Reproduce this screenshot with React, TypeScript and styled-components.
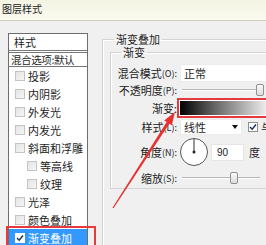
import React from 'react'
import styled, { createGlobalStyle } from 'styled-components'

const GlobalStyle = createGlobalStyle`
  html, body { margin: 0; padding: 0; }
  body {
    font-family: "Noto Sans CJK SC", "Noto Sans", sans-serif;
    font-size: 11px;
    color: #1e1e1e;
    background: #f0f0f0;
  }
`

const Window = styled.div`
  position: relative;
  width: 266px;
  height: 245px;
  overflow: hidden;
  background: #f0f0f0;
`

const TitleBar = styled.div`
  height: 20px;
  border-bottom: 1px solid #cfcfc4;
  background: linear-gradient(#f4f4e3, #fafaef);
  padding-left: 2px;
  font-size: 10px;
  line-height: 18px;
  color: #222;
`

const Body = styled.div`
  display: flex;
  align-items: flex-start;
  padding: 12px 0 0 8px;
`

const StyleList = styled.div`
  flex: none;
  width: 78px;
  height: 240px;
  border: 1px solid #6e6e6e;
  background: #fff;
  display: flex;
  flex-direction: column;
`

const ListHeader = styled.div`
  height: 16px;
  line-height: 17px;
  padding-left: 5px;
  border-bottom: 3px double #777;
`

const MixRow = styled.div`
  height: 13px;
  line-height: 13px;
  padding-left: 2px;
  border-bottom: 1px solid #777;
  font-size: 10.5px;
  letter-spacing: -0.4px;
  white-space: nowrap;
`

const Item = styled.div<{ $indent?: boolean; $active?: boolean }>`
  position: relative;
  height: 18px;
  display: flex;
  align-items: center;
  gap: 3px;
  padding-left: ${p => (p.$indent ? 18 : 6)}px;
  white-space: nowrap;
  background: ${p => (p.$active ? '#3399ff' : 'transparent')};
  color: ${p => (p.$active ? '#fff' : '#1e1e1e')};

  ${p => p.$active && `
    &::after {
      content: '';
      position: absolute;
      left: -3px;
      top: -3px;
      width: 86px;
      height: 40px;
      border: 2px solid #e8393d;
    }
  `}
`

const Box = styled.span<{ $checked?: boolean }>`
  flex: none;
  width: 8px;
  height: 8px;
  border: 1px solid ${p => (p.$checked ? '#fff' : '#c4c4c4')};
  background: ${p => (p.$checked ? '#fff' : 'linear-gradient(135deg, #e4e4e4, #f6f6f6)')};
  display: flex;
  align-items: center;
  justify-content: center;
`

const Tick = () => (
  <svg width="8" height="8" viewBox="0 0 8 8">
    <path d="M1 4 L3.2 6.3 L7 1.5" fill="none" stroke="#1f2d5a" strokeWidth="1.4" />
  </svg>
)

const RightPane = styled.div`
  margin-left: 14px;
`

const GroupBox = styled.fieldset`
  margin: 0;
  padding: 1px 0 0 7px;
  width: 220px;
  height: 240px;
  border: 1px solid #d3d3d3;
  box-shadow: inset 1px 1px 0 #fff;
  min-width: 0;
`

const Legend = styled.legend<{ $offset: number }>`
  margin-left: ${p => p.$offset}px;
  padding: 0 2px;
  font-size: 11px;
  line-height: 12px;
`

const InnerBox = styled.fieldset`
  margin: 0;
  padding: 0;
  width: 200px;
  border: 1px solid #d3d3d3;
  box-shadow: inset 1px 1px 0 #fff;
  min-width: 0;
`

const Form = styled.div`
  margin-top: 6px;
  display: grid;
  grid-template-columns: 66px 1fr;
  grid-template-rows: 18px 16px 20px 18px 32px 20px;
  column-gap: 3px;
`

const Label = styled.div`
  display: flex;
  align-items: center;
  justify-content: flex-end;
  white-space: nowrap;
  font-size: 11px;
  color: #222;

  small { font-size: 9px; }
`

const Control = styled.div`
  display: flex;
  align-items: center;
  white-space: nowrap;
`

const Select = styled.div<{ $w: number; $h?: number }>`
  position: relative;
  width: ${p => p.$w}px;
  height: ${p => p.$h || 16}px;
  background: #fff;
  border: 1px solid #ececec;
  padding-left: 3px;
  box-sizing: border-box;
  display: flex;
  align-items: center;
`

const Caret = styled.span`
  margin-left: auto;
  margin-right: 3px;
  width: 0;
  height: 0;
  border-left: 3.5px solid transparent;
  border-right: 3.5px solid transparent;
  border-top: 4px solid #111;
`

const Slider = styled.div`
  position: relative;
  width: 78px;
  height: 2px;
  margin-left: 2px;
  border-top: 1px solid #b8b8b8;
  border-bottom: 1px solid #fff;
  box-sizing: border-box;
`

const Thumb = styled.span<{ $at: number }>`
  position: absolute;
  left: ${p => p.$at}px;
  top: -6px;
  width: 6px;
  height: 10px;
  border: 1px solid #909090;
  border-radius: 2px;
  background: linear-gradient(#fafafa, #dcdcdc);
`

const GradientBar = styled.div`
  margin-left: -3px;
  width: 110px;
  height: 20px;
  box-sizing: border-box;
  border: 2px solid #e5393b;
  padding: 1px;
  background: #fff;
`

const GradientFill = styled.div`
  height: 100%;
  background: linear-gradient(to right, #000 0%, #6a6a6a 35%, #f2f2f2 85%, #fff 100%);
`

const CheckLabel = styled.span`
  margin-left: 6px;
  display: flex;
  align-items: center;
  gap: 3px;
`

const SmallBox = styled.span`
  width: 8px;
  height: 8px;
  border: 1px solid #8e8f8f;
  background: #fff;
  display: flex;
  align-items: center;
  justify-content: center;
`

const NumberInput = styled.div`
  width: 33px;
  height: 17px;
  box-sizing: border-box;
  background: #fff;
  border: 1px solid #e6e6e6;
  padding-left: 5px;
  line-height: 16px;
  font-family: "Liberation Sans", Arial, sans-serif;
  font-size: 10px;
  margin-left: 1px;
`

const Unit = styled.span`
  margin-left: 5px;
`

const Overlay = styled.svg`
  position: absolute;
  left: 0;
  top: 0;
  pointer-events: none;
`

const Dial = () => (
  <svg width="30" height="30" viewBox="0 0 30 30">
    <circle cx="14" cy="15" r="13.5" fill="#fff" stroke="#555" strokeWidth="1" />
    <line x1="14" y1="15" x2="14" y2="2" stroke="#333" strokeWidth="1" />
    <circle cx="14" cy="15" r="1.5" fill="#222" />
  </svg>
)

const items = [
  { name: '投影' },
  { name: '内阴影' },
  { name: '外发光' },
  { name: '内发光' },
  { name: '斜面和浮雕' },
  { name: '等高线', indent: true },
  { name: '纹理', indent: true },
  { name: '光泽' },
  { name: '颜色叠加' },
  { name: '渐变叠加', active: true },
]

export default function App() {
  return (
    <Window>
      <GlobalStyle />
      <TitleBar>图层样式</TitleBar>
      <Body>
        <StyleList>
          <ListHeader>样式</ListHeader>
          <MixRow>混合选项:默认</MixRow>
          {items.map(it => (
            <Item key={it.name} $indent={it.indent} $active={it.active}>
              <Box $checked={it.active}>{it.active && <Tick />}</Box>
              {it.name}
            </Item>
          ))}
        </StyleList>
        <RightPane>
          <GroupBox>
            <Legend $offset={4}>渐变叠加</Legend>
            <InnerBox>
              <Legend $offset={10}>渐变</Legend>
              <Form>
                <Label>混合模式<small>(O):</small></Label>
                <Control>
                  <Select $w={100} $h={18}>正常</Select>
                </Control>

                <Label>不透明度<small>(P):</small></Label>
                <Control>
                  <Slider><Thumb $at={74} /></Slider>
                </Control>

                <Label>渐变:</Label>
                <Control>
                  <GradientBar><GradientFill /></GradientBar>
                </Control>

                <Label>样式<small>(L):</small></Label>
                <Control>
                  <Select $w={62}>线性<Caret /></Select>
                  <CheckLabel>
                    <SmallBox><Tick /></SmallBox>与图层对齐
                  </CheckLabel>
                </Control>

                <Label>角度<small>(N):</small></Label>
                <Control>
                  <Dial />
                  <NumberInput>90</NumberInput>
                  <Unit>度</Unit>
                </Control>

                <Label>缩放<small>(S):</small></Label>
                <Control>
                  <Slider><Thumb $at={48} /></Slider>
                </Control>
              </Form>
            </InnerBox>
          </GroupBox>
        </RightPane>
      </Body>
      <Overlay width="266" height="245" viewBox="0 0 266 245">
        <polygon
          points="112.5,207.7 166.7,122.1 164.2,120.5 175,112 171.8,125.3 169.3,123.7 113.5,208.3"
          fill="#e8302e"
        />
      </Overlay>
    </Window>
  )
}
